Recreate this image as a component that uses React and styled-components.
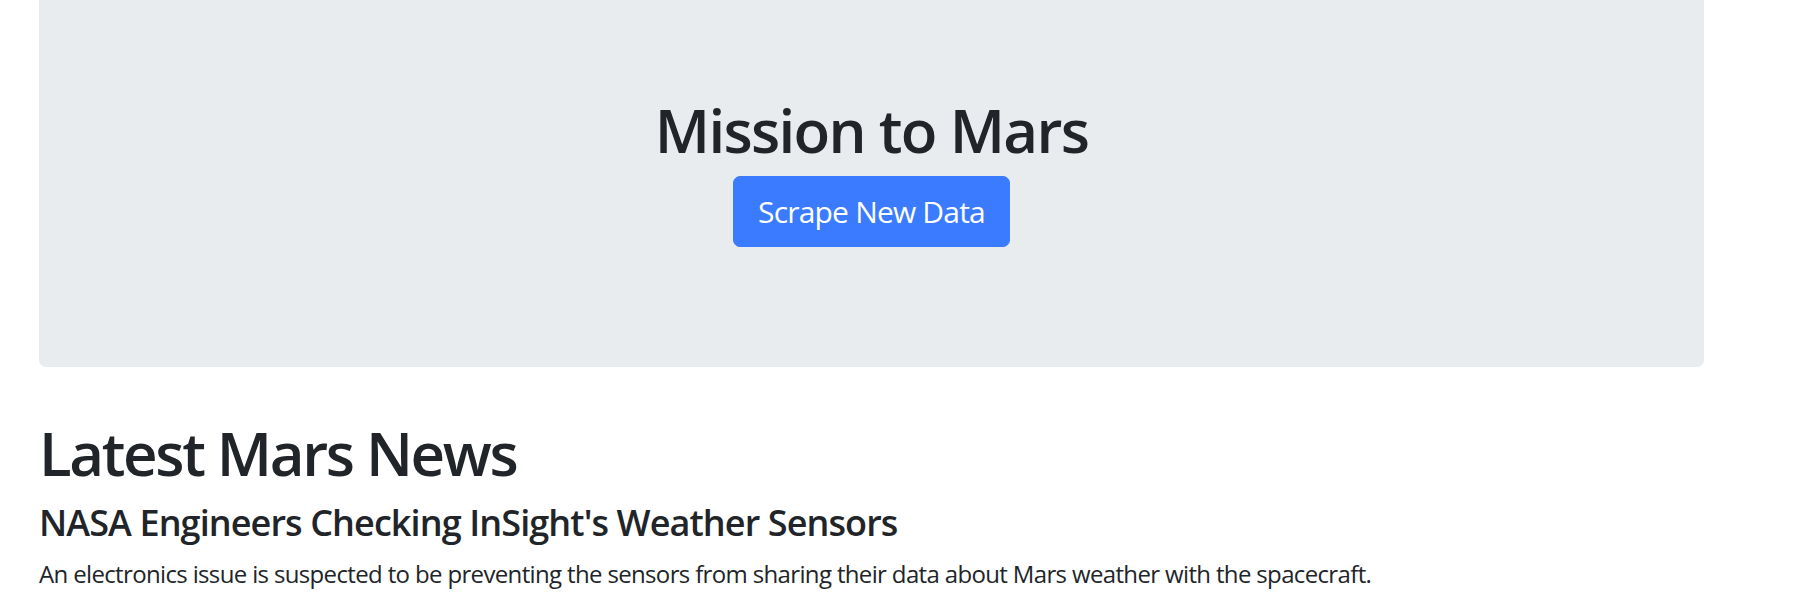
import React from "react";
import styled, { createGlobalStyle } from "styled-components";

const GlobalStyle = createGlobalStyle`
  html, body {
    margin: 0;
    padding: 0;
    background: #ffffff;
  }
  body {
    font-family: "Open Sans", "Noto Sans", "Liberation Sans", sans-serif;
    color: #212529;
    font-size: 24px;
    line-height: 1.5;
  }
  * { box-sizing: border-box; }
`;

const Page = styled.div`
  width: 1665px;
  margin-left: 39px;
  display: flex;
  flex-direction: column;
`;

const Jumbotron = styled.header`
  background: #e9ecef;
  border-radius: 0 0 7px 7px;
  padding: 94px 48px 96px;
  margin-bottom: 50px;
  display: flex;
  flex-direction: column;
  align-items: center;
  text-align: center;
`;

const Title = styled.h1`
  margin: 0 0 ${(p) => (p.$tight ? "12px" : "10px")};
  font-size: 60px;
  font-weight: 600;
  line-height: 1.2;
  letter-spacing: ${(p) => (p.$tight ? "-0.039em" : "-0.028em")};
`;

const ButtonRow = styled.p`
  margin: 0 0 24px;
`;

const Button = styled.a`
  display: inline-block;
  background: #3a7bff;
  color: #ffffff;
  border: 1px solid #3a7bff;
  border-radius: 7px;
  padding: 12px 24px;
  font-size: 30px;
  line-height: 1.5;
  font-weight: 400;
  letter-spacing: -0.027em;
  text-decoration: none;
  cursor: pointer;
`;

const Section = styled.section`
  display: flex;
  flex-direction: column;
`;

const NewsTitle = styled.h4`
  margin: 0 0 12px;
  font-size: 36px;
  font-weight: 600;
  line-height: 1.2;
  letter-spacing: -0.025em;
`;

const Teaser = styled.p`
  margin: 0 0 24px;
  font-size: 24px;
  line-height: 1.5;
  letter-spacing: -0.027em;
`;

export default function App() {
  return (
    <>
      <GlobalStyle />
      <Page>
        <Jumbotron>
          <Title>Mission to Mars</Title>
          <ButtonRow>
            <Button href="#" role="button">Scrape New Data</Button>
          </ButtonRow>
        </Jumbotron>
        <Section>
          <Title as="h1" $tight>Latest Mars News</Title>
          <NewsTitle>NASA Engineers Checking InSight's Weather Sensors</NewsTitle>
          <Teaser>
            An electronics issue is suspected to be preventing the sensors from sharing their data about Mars weather with the spacecraft.
          </Teaser>
        </Section>
      </Page>
    </>
  );
}
